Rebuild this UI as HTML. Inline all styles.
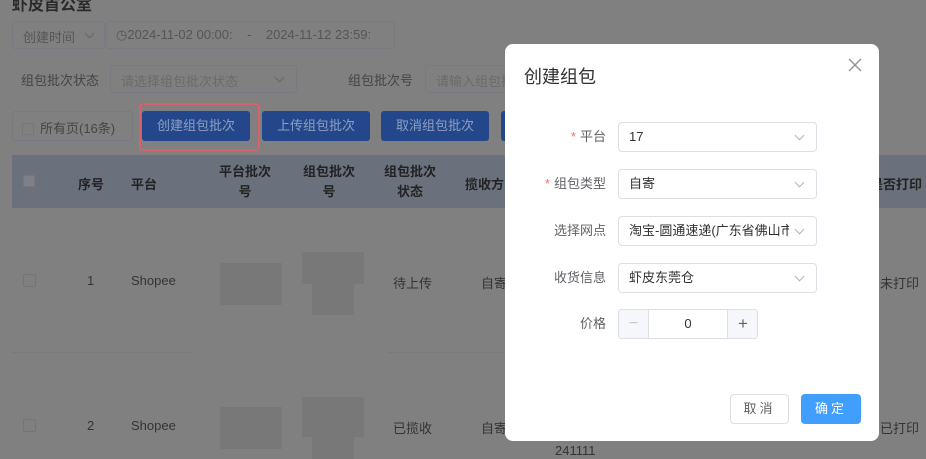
<!DOCTYPE html>
<html><head><meta charset="utf-8"><style>
*{box-sizing:border-box;margin:0;padding:0}
body{width:926px;height:459px;overflow:hidden;background:#808080;font-family:"Liberation Sans","Noto Sans CJK SC",sans-serif;font-size:13px;color:#333;position:relative}
.a{position:absolute;white-space:nowrap}
.box{position:absolute;border:1px solid #777a80;border-radius:3px;white-space:nowrap}
.btn{position:absolute;background:#23478a;color:#8ea0c2;border-radius:3px;text-align:center;line-height:30px;font-size:13px}
.chev{position:absolute;width:7px;height:7px;border-right:1px solid #999;border-bottom:1px solid #999;transform:rotate(45deg)}
.blur{position:absolute;background:#787878}
.m{position:absolute;left:505px;top:44px;width:374px;height:397px;background:#fff;border-radius:8px}
.lab{position:absolute;right:273px;font-size:13px;color:#606266;text-align:right;line-height:30px;white-space:nowrap}
.sel{position:absolute;left:113px;width:199px;height:30px;border:1px solid #dcdfe6;border-radius:4px;padding-left:10px;line-height:28px;font-size:13px;color:#303133}
.sel .chev{right:13px;top:9px;border-color:#b0b3b8}
.star{color:#f56c6c;margin-right:4px}
</style></head><body>
<div class="a" style="left:12px;top:-9px;font-size:16px;font-weight:bold;color:#2a2a2a">虾皮首公室</div>
<div class="box" style="left:12px;top:21px;width:93px;height:28px;padding:5px 10px;color:#555">创建时间<span class="chev" style="left:73px;top:8px;border-color:#666"></span></div>
<div class="box" style="left:106px;top:21px;width:289px;height:28px;padding:5px 9px;color:#555">◷2024-11-02 00:00:&nbsp;&nbsp;&nbsp;&nbsp;-&nbsp;&nbsp;&nbsp;&nbsp;2024-11-12 23:59:</div>
<div class="a" style="left:21px;top:70px;color:#444">组包批次状态</div>
<div class="box" style="left:110px;top:65px;width:187px;height:28px;padding:5px 10px;color:#6a6a6a">请选择组包批次状态<span class="chev" style="left:165px;top:8px;border-color:#666"></span></div>
<div class="a" style="left:348px;top:70px;color:#444">组包批次号</div>
<div class="box" style="left:425px;top:65px;width:100px;height:28px;padding:5px 10px;color:#6a6a6a;overflow:hidden">请输入组包批</div>
<div class="box" style="left:12px;top:111px;width:121px;height:30px;padding:6px 9px;color:#444"><span style="display:inline-block;width:12px;height:12px;border:1px solid #777;vertical-align:-2px;margin-right:6px"></span>所有页(16条)</div>
<div class="a" style="left:139px;top:103px;width:121px;height:48px;border:2px solid #d9606d;border-radius:4px"></div>
<div class="btn" style="left:142px;top:111px;width:108px;height:30px">创建组包批次</div>
<div class="btn" style="left:262px;top:111px;width:108px;height:30px">上传组包批次</div>
<div class="btn" style="left:381px;top:111px;width:108px;height:30px">取消组包批次</div>
<div class="btn" style="left:501px;top:111px;width:20px;height:30px"></div>
<div class="a" style="left:12px;top:155px;width:914px;height:53px;background:#6b717c"></div>
<div class="a" style="left:23px;top:175px;width:12px;height:12px;background:#7d8089;border:1px solid #777"></div>
<div class="a" style="left:0;top:155px;width:926px;height:53px;font-weight:bold;color:#222;font-size:13px">
<span class="a" style="left:78px;top:19px">序号</span>
<span class="a" style="left:131px;top:19px">平台</span>
<span class="a" style="left:219px;top:7px;text-align:center;line-height:20px">平台批次<br>号</span>
<span class="a" style="left:303px;top:7px;text-align:center;line-height:20px">组包批次<br>号</span>
<span class="a" style="left:384px;top:7px;text-align:center;line-height:20px">组包批次<br>状态</span>
<span class="a" style="left:465px;top:19px">揽收方</span>
<span class="a" style="left:870px;top:19px">是否打印</span>
</div>
<div class="a" style="left:12px;top:352px;width:180px;height:1px;background:#7a7a7a"></div>
<div class="a" style="left:387px;top:352px;width:120px;height:1px;background:#7a7a7a"></div>
<div class="a" style="left:23px;top:274px;width:13px;height:13px;border:1px solid #747474;border-radius:2px"></div>
<div class="a" style="left:23px;top:419px;width:13px;height:13px;border:1px solid #747474;border-radius:2px"></div>
<div class="a" style="left:87px;top:273px">1</div>
<div class="a" style="left:87px;top:418px">2</div>
<div class="a" style="left:131px;top:273px">Shopee</div>
<div class="a" style="left:131px;top:418px">Shopee</div>
<div class="blur" style="left:220px;top:263px;width:62px;height:42px"></div>
<div class="blur" style="left:302px;top:252px;width:62px;height:32px"></div>
<div class="blur" style="left:312px;top:284px;width:42px;height:31px"></div>
<div class="blur" style="left:220px;top:407px;width:62px;height:42px"></div>
<div class="blur" style="left:302px;top:397px;width:62px;height:40px"></div>
<div class="blur" style="left:312px;top:437px;width:42px;height:22px"></div>
<div class="a" style="left:393px;top:273px">待上传</div>
<div class="a" style="left:393px;top:418px">已揽收</div>
<div class="a" style="left:481px;top:273px">自寄</div>
<div class="a" style="left:481px;top:418px">自寄</div>
<div class="a" style="left:880px;top:273px">未打印</div>
<div class="a" style="left:880px;top:418px">已打印</div>
<div class="a" style="left:555px;top:443px">241111</div>

<div class="m">
<div class="a" style="left:19px;top:19px;font-size:18px;color:#303133">创建组包</div>
<svg class="a" style="left:343px;top:14px" width="14" height="14" viewBox="0 0 14 14"><path d="M1 1L13 13M13 1L1 13" stroke="#909399" stroke-width="1.4"/></svg>
<div class="lab" style="top:78px"><span class="star">*</span>平台</div>
<div class="sel" style="top:78px">17<span class="chev"></span></div>
<div class="lab" style="top:125px"><span class="star">*</span>组包类型</div>
<div class="sel" style="top:125px">自寄<span class="chev"></span></div>
<div class="lab" style="top:172px">选择网点</div>
<div class="sel" style="top:172px"><div style="width:160px;overflow:hidden;white-space:nowrap">淘宝-圆通速递(广东省佛山市</div><span class="chev"></span></div>
<div class="lab" style="top:219px">收货信息</div>
<div class="sel" style="top:219px">虾皮东莞仓<span class="chev"></span></div>
<div class="lab" style="top:265px">价格</div>
<div class="a" style="left:113px;top:265px;width:140px;height:30px;border:1px solid #dcdfe6;border-radius:4px;overflow:hidden">
<div class="a" style="left:0;top:0;width:30px;height:28px;background:#f5f7fa;border-right:1px solid #dcdfe6;text-align:center;line-height:28px;color:#c0c4cc;font-size:16px">−</div>
<div class="a" style="left:30px;top:0;width:78px;height:28px;text-align:center;line-height:28px;color:#303133">0</div>
<div class="a" style="left:108px;top:0;width:31px;height:28px;background:#f5f7fa;border-left:1px solid #dcdfe6;text-align:center;line-height:28px;color:#606266;font-size:17px">+</div>
</div>
<div class="a" style="left:225px;top:350px;width:59px;height:30px;border:1px solid #dcdfe6;border-radius:4px;text-align:center;line-height:28px;color:#606266;letter-spacing:3px">取消</div>
<div class="a" style="left:296px;top:350px;width:60px;height:30px;background:#409eff;border-radius:4px;text-align:center;line-height:30px;color:#fff;letter-spacing:3px">确定</div>
</div>
</body></html>
